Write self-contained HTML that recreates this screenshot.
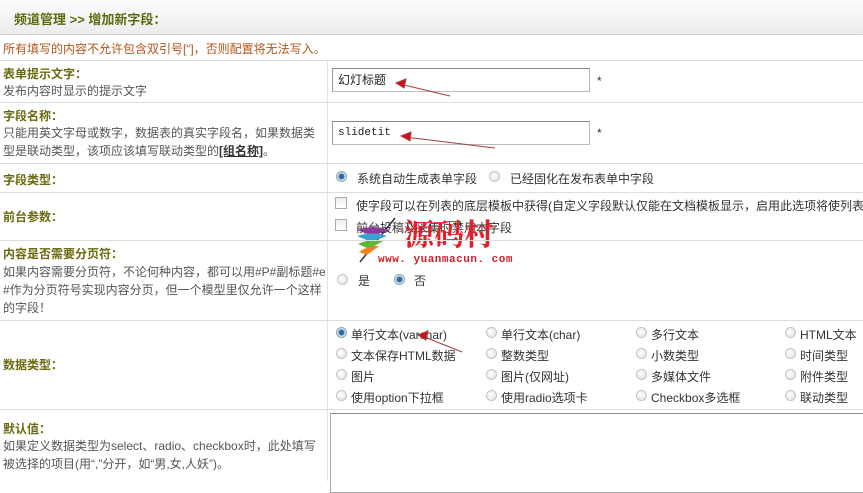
<!DOCTYPE html>
<html><head><meta charset="utf-8"><style>
*{margin:0;padding:0;box-sizing:border-box}
body{width:863px;height:481px;overflow:hidden;background:#fff;font-family:"Liberation Sans","Noto Sans CJK SC",sans-serif;font-size:12px;color:#555;position:relative}
.a{position:absolute;white-space:nowrap}
.hd{position:absolute;left:0;top:0;width:863px;height:35px;background:linear-gradient(#fcfcfc,#ececec);border-bottom:1px solid #d0d0d0}
.hl{position:absolute;left:0;width:863px;height:1px;background:#dcdcdc}
.vl{position:absolute;left:327px;width:1px;background:#e2e2e2}
.lb{color:#6a6a10;font-weight:bold;font-size:12px}
.r{position:absolute;width:11px;height:11px;border-radius:50%;border:1px solid #c4c4c4;background:radial-gradient(circle at 40% 40%,#fff,#ddd)}
.r.on{background:radial-gradient(circle,#2a5a8a 0,#3c76a8 2.5px,#cfe0ef 3.5px,#eef 6px);border-color:#8aa}
.c{position:absolute;width:12px;height:12px;border:1px solid #aaa;background:linear-gradient(#eee,#fff)}
.in{position:absolute;left:332px;width:258px;height:24px;border:1px solid #bbb;border-top-color:#888;border-left-color:#999;background:#fff;color:#222;padding-left:5px;line-height:22px}
.t{color:#333}
</style></head><body>
<div class="hd"></div>
<div class="a" style="left:14px;top:9px;color:#5c6b0e;font-weight:bold;font-size:13px">频道管理 &gt;&gt; 增加新字段：</div>
<div class="a" style="left:3px;top:40px;color:#b0541a">所有填写的内容不允许包含双引号[“]，否则配置将无法写入。</div>
<div class="hl" style="top:60px"></div>
<div class="vl" style="top:60px;height:421px"></div>
<div class="a lb" style="left:3px;top:65px">表单提示文字：</div>
<div class="a" style="left:3px;top:82px">发布内容时显示的提示文字</div>
<div class="in" style="top:68px">幻灯标题</div>
<div class="a t" style="left:597px;top:74px">*</div>
<div class="hl" style="top:102px"></div>
<div class="a lb" style="left:3px;top:107px">字段名称：</div>
<div class="a" style="left:3px;top:124px">只能用英文字母或数字，数据表的真实字段名，如果数据类</div>
<div class="a" style="left:3px;top:142px">型是联动类型，该项应该填写联动类型的<u style="color:#333;font-weight:bold">[组名称]</u>。</div>
<div class="in" style="top:121px;font-family:'Liberation Mono',monospace;font-size:11px">slidetit</div>
<div class="a t" style="left:597px;top:126px">*</div>
<div class="hl" style="top:163px"></div>
<div class="a lb" style="left:3px;top:171px">字段类型：</div>
<div class="r on" style="left:336px;top:171px"></div><div class="a t" style="left:357px;top:170px">系统自动生成表单字段</div>
<div class="r" style="left:489px;top:171px"></div><div class="a t" style="left:510px;top:170px">已经固化在发布表单中字段</div>
<div class="hl" style="top:192px"></div>
<div class="a lb" style="left:3px;top:208px">前台参数：</div>
<div class="c" style="left:335px;top:197px"></div><div class="a t" style="left:356px;top:197px">使字段可以在列表的底层模板中获得(自定义字段默认仅能在文档模板显示，启用此选项将使列表</div>
<div class="c" style="left:335px;top:219px"></div><div class="a t" style="left:356px;top:219px">前台投稿及采集时禁用本字段</div>
<svg class="a" style="left:355px;top:214px" width="50" height="50"><path d="M5 48 L40 4" stroke="#234" stroke-width="1.5"/><path d="M2 16 Q18 10 34 16 L18 22Z" fill="#8b3a9a"/><path d="M2 22 Q18 17 32 22 L16 28Z" fill="#3aa0d8"/><path d="M3 30 Q16 24 28 27 L14 35Z" fill="#5cb83a"/><path d="M4 38 Q14 31 24 32 L12 41Z" fill="#f08020"/></svg>
<div class="a" style="left:404px;top:214px;color:#e0202a;font-size:30px;font-weight:bold;font-family:'Noto Serif CJK SC',serif;line-height:36px">源码村</div>
<div class="a" style="left:378px;top:254px;color:#d0202a;font-size:11px;font-weight:bold;font-family:'Liberation Mono',monospace;letter-spacing:0.5px">www. yuanmacun. com</div>
<div class="hl" style="top:240px"></div>
<div class="a lb" style="left:3px;top:245px">内容是否需要分页符：</div>
<div class="a" style="left:3px;top:263px">如果内容需要分页符，不论何种内容，都可以用#P#副标题#e</div>
<div class="a" style="left:3px;top:281px">#作为分页符号实现内容分页，但一个模型里仅允许一个这样</div>
<div class="a" style="left:3px;top:299px">的字段！</div>
<div class="r" style="left:337px;top:274px"></div><div class="a t" style="left:358px;top:272px">是</div>
<div class="r on" style="left:394px;top:274px"></div><div class="a t" style="left:414px;top:272px">否</div>
<div class="hl" style="top:320px"></div>
<div class="a lb" style="left:3px;top:356px">数据类型：</div>
<div class="r on" style="left:336px;top:327px"></div><div class="a t" style="left:351px;top:326px">单行文本(varchar)</div>
<div class="r" style="left:486px;top:327px"></div><div class="a t" style="left:501px;top:326px">单行文本(char)</div>
<div class="r" style="left:636px;top:327px"></div><div class="a t" style="left:651px;top:326px">多行文本</div>
<div class="r" style="left:785px;top:327px"></div><div class="a t" style="left:800px;top:326px">HTML文本</div>
<div class="r" style="left:336px;top:348px"></div><div class="a t" style="left:351px;top:347px">文本保存HTML数据</div>
<div class="r" style="left:486px;top:348px"></div><div class="a t" style="left:501px;top:347px">整数类型</div>
<div class="r" style="left:636px;top:348px"></div><div class="a t" style="left:651px;top:347px">小数类型</div>
<div class="r" style="left:785px;top:348px"></div><div class="a t" style="left:800px;top:347px">时间类型</div>
<div class="r" style="left:336px;top:369px"></div><div class="a t" style="left:351px;top:368px">图片</div>
<div class="r" style="left:486px;top:369px"></div><div class="a t" style="left:501px;top:368px">图片(仅网址)</div>
<div class="r" style="left:636px;top:369px"></div><div class="a t" style="left:651px;top:368px">多媒体文件</div>
<div class="r" style="left:785px;top:369px"></div><div class="a t" style="left:800px;top:368px">附件类型</div>
<div class="r" style="left:336px;top:390px"></div><div class="a t" style="left:351px;top:389px">使用option下拉框</div>
<div class="r" style="left:486px;top:390px"></div><div class="a t" style="left:501px;top:389px">使用radio选项卡</div>
<div class="r" style="left:636px;top:390px"></div><div class="a t" style="left:651px;top:389px">Checkbox多选框</div>
<div class="r" style="left:785px;top:390px"></div><div class="a t" style="left:800px;top:389px">联动类型</div>
<svg class="a" style="left:0;top:0" width="863" height="481"><g stroke="#a04040" fill="#d0101a"><line x1="400" y1="84" x2="450" y2="96"/><path d="M396 83 L406 79 L404 88Z"/><line x1="405" y1="137" x2="495" y2="148"/><path d="M401 136 L411 132 L410 141Z"/><line x1="422" y1="336" x2="462" y2="352"/><path d="M418 335 L428 331 L426 340Z"/></g></svg>
<div class="hl" style="top:409px"></div>
<div class="a lb" style="left:3px;top:420px">默认值：</div>
<div class="a" style="left:3px;top:437px">如果定义数据类型为select、radio、checkbox时，此处填写</div>
<div class="a" style="left:3px;top:455px">被选择的项目(用“,”分开，如“男,女,人妖”)。</div>
<div class="a" style="left:330px;top:413px;width:540px;height:80px;border:1px solid #aaa;border-top-color:#888;background:#fff"></div>
</body></html>
